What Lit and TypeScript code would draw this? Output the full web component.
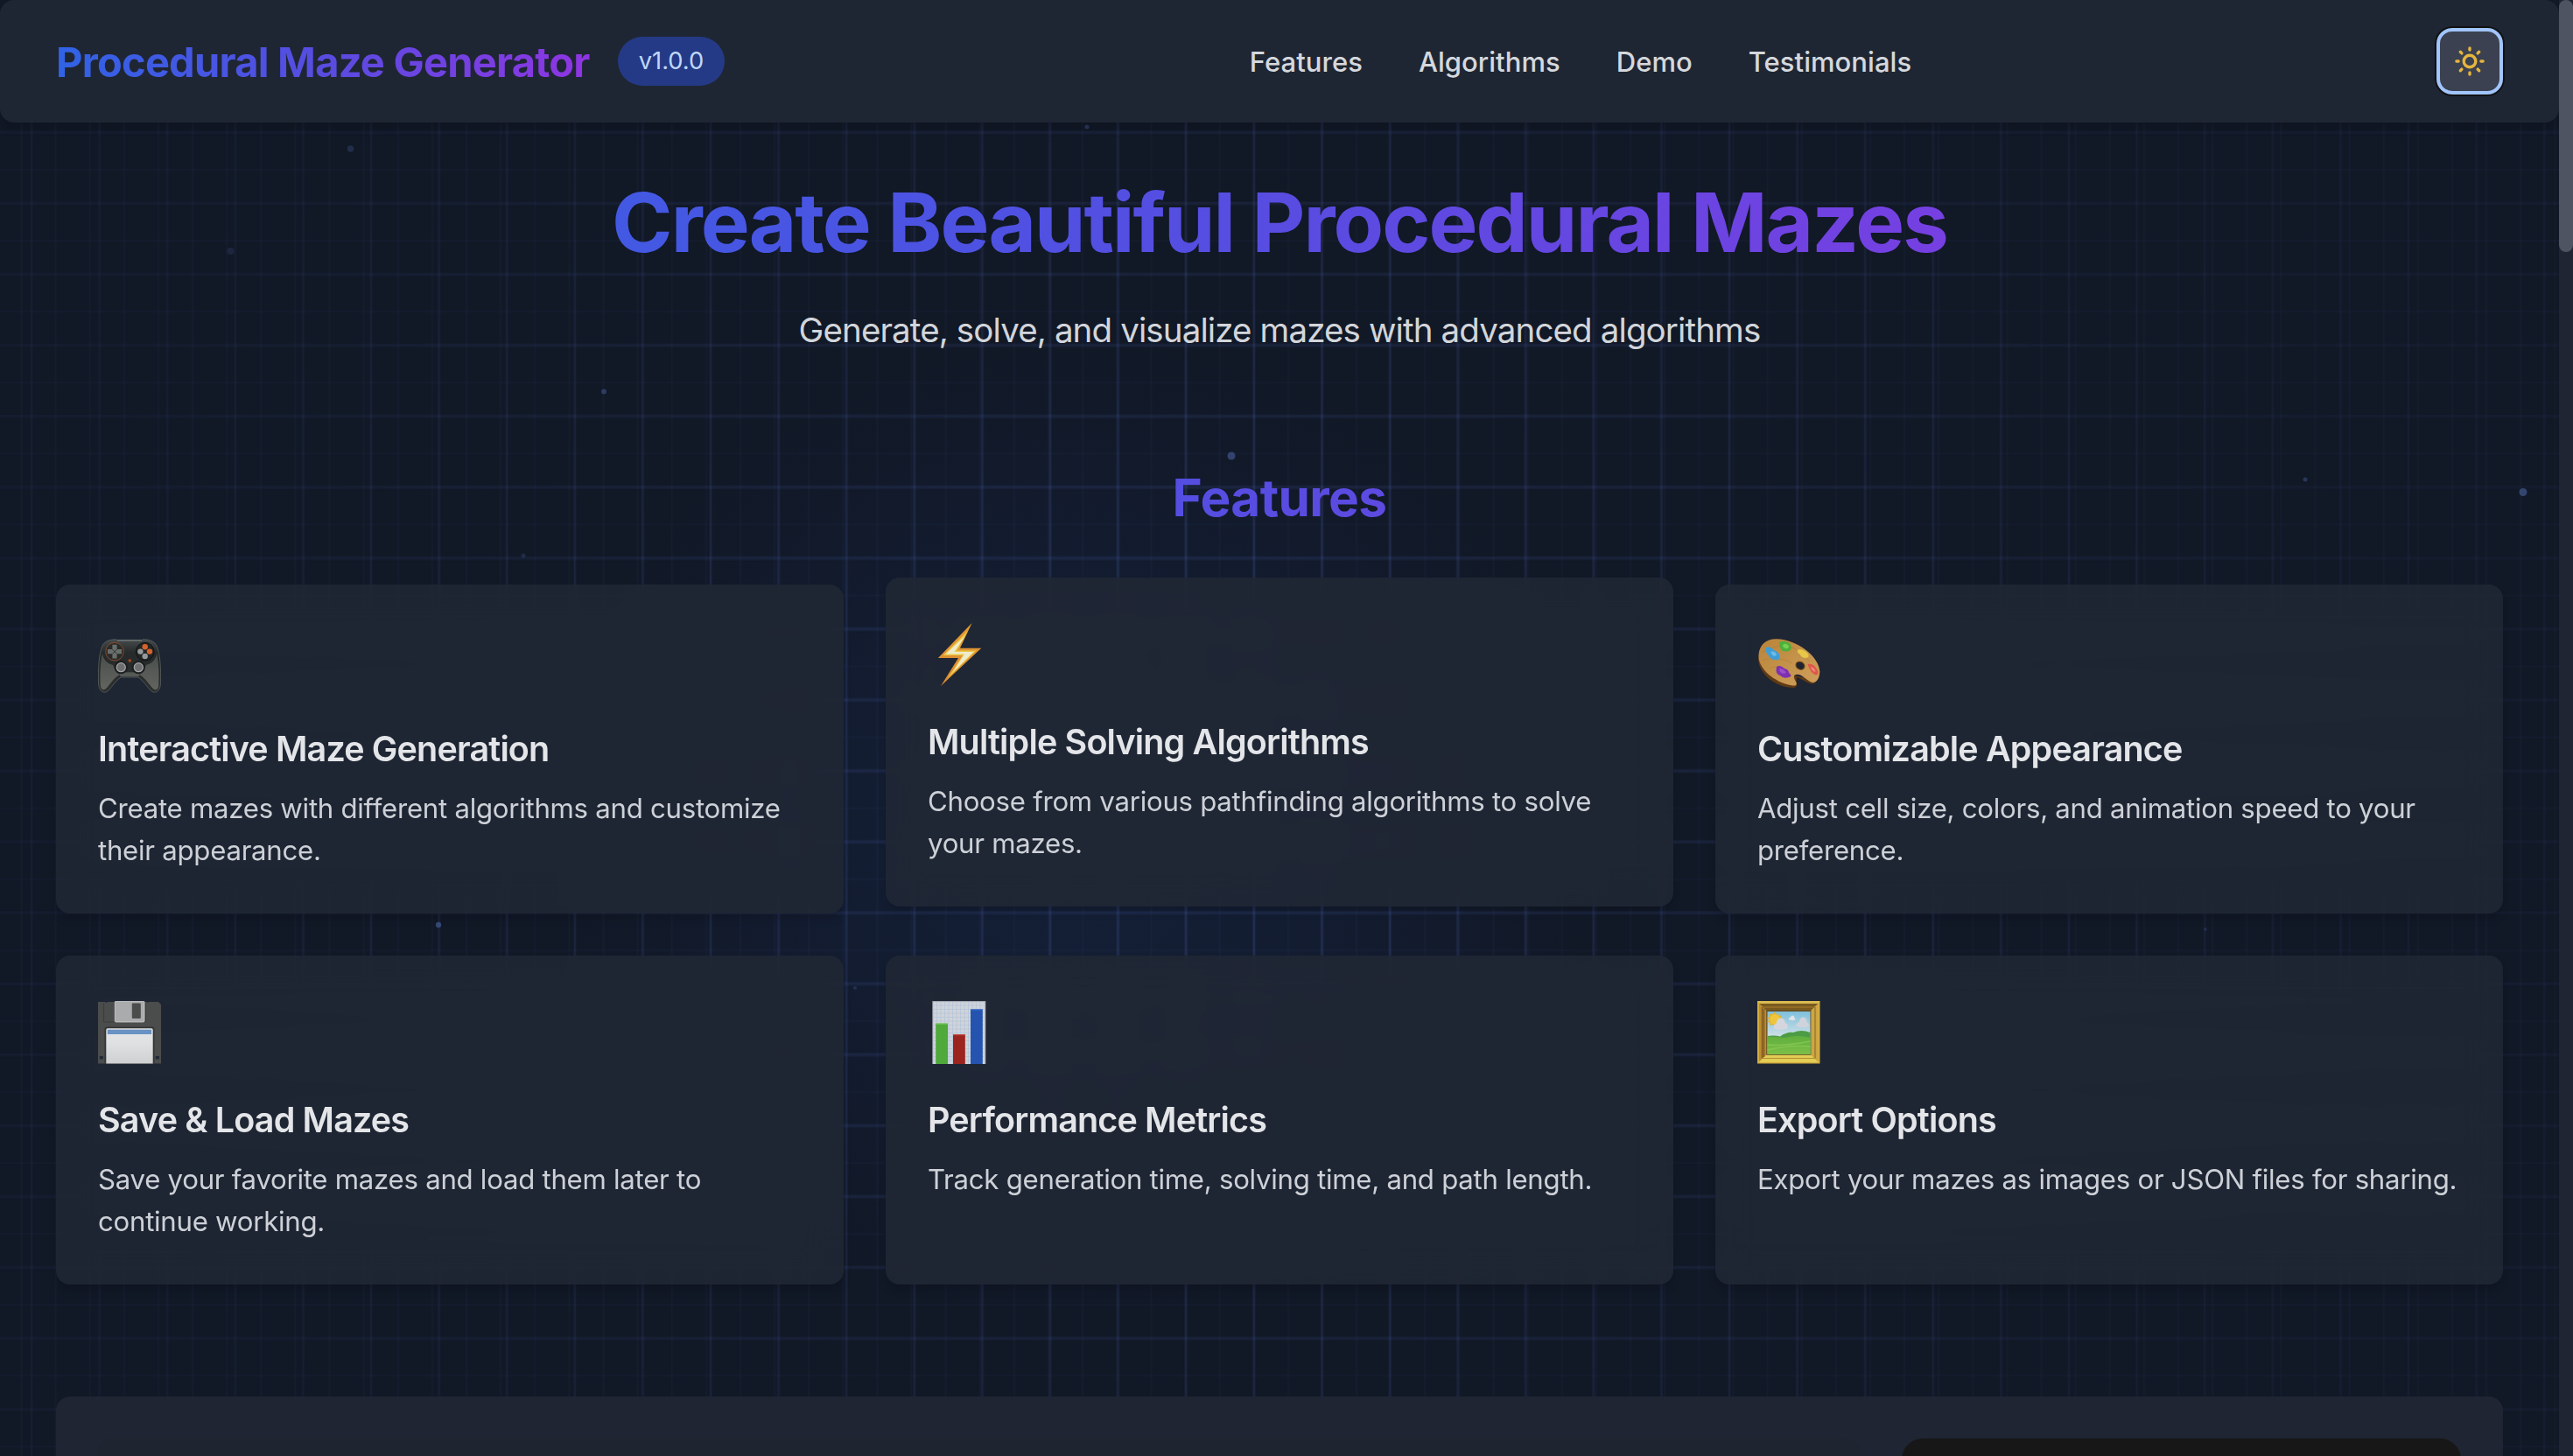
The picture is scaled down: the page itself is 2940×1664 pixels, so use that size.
import { LitElement, html, css, svg, nothing } from "lit";
import { customElement, property } from "lit/decorators.js";

const gamepad = svg`
  <defs>
    <linearGradient id="gp" x1="0" y1="0" x2="0" y2="1"><stop offset="0" stop-color="#454b4b"/><stop offset=".25" stop-color="#262a2a"/><stop offset="1" stop-color="#2b2f2e"/></linearGradient>
    <linearGradient id="gh" x1="0" y1="0" x2="0" y2="1"><stop offset="0" stop-color="#4a4e4c"/><stop offset="1" stop-color="#62645f"/></linearGradient>
  </defs>
  <path d="M5 18 C7 13 14 10.4 21 10.8 L22 12 L50 12 L51 10.8 C58 10.4 65 13 67 18 C71 28 72 42 71.4 62 C71 70 65 74 60 69 C56 65 52 58 46 54 L26 54 C20 58 16 65 12 69 C7 74 1 70 .6 62 C0 42 1 28 5 18Z" fill="url(#gp)" stroke="#565b59" stroke-width=".9"/>
  <path d="M5 27 C2.500 38 2 52 2.800 64 C4 70 8 69 11 65 C15 60 19 54 25 51 C20 49 19 44 17 40 C9 38 6 33 5 27Z" fill="url(#gh)"/>
  <path d="M67 27 C69.500 38 70 52 69.200 64 C68 70 64 69 61 65 C57 60 53 54 47 51 C52 49 53 44 55 40 C63 38 66 33 67 27Z" fill="url(#gh)"/>
  <path d="M24 49.500 Q36 47 48 49.500 L46.500 53 L25.500 53Z" fill="#555956"/>
  <circle cx="19" cy="24.700" r="10.300" fill="#282b2b" stroke="#8a4a2a" stroke-width="1"/>
  <circle cx="53.700" cy="24.700" r="10.300" fill="#222525" stroke="#111" stroke-width="1"/>
  <path d="M16.400 16.800h5.200v5.300h5.400v5.200h-5.400v5.300h-5.200v-5.300h-5.400v-5.200h5.400z" fill="#6a6f6b"/>
  <path d="M16.400 22.100l5.200 5.200M21.600 22.100l-5.200 5.200" stroke="#303433" stroke-width="1"/>
  <circle cx="53.700" cy="19.200" r="3.200" fill="#d4622a"/><circle cx="59" cy="24.600" r="3.200" fill="#d4622a"/>
  <circle cx="48.400" cy="24.600" r="3.200" fill="#96999a"/><circle cx="53.700" cy="30" r="3.200" fill="#96999a"/>
  <circle cx="36.300" cy="35" r="2" fill="#823a1d"/><circle cx="36.300" cy="35" r=".7" fill="#e07834"/>
  <circle cx="26.300" cy="42.700" r="7.600" fill="#1c1f1f"/><circle cx="46.300" cy="42.700" r="7.600" fill="#1c1f1f"/>
  <circle cx="26.300" cy="42.700" r="5" fill="#6d706f" stroke="#a1a4a4" stroke-width="1.300"/>
  <circle cx="46.300" cy="42.700" r="5" fill="#6d706f" stroke="#a1a4a4" stroke-width="1.300"/>
  <path d="M22 11.800H50" stroke="#8b9190" stroke-width=".9"/>`;

const bolt = svg`
  <defs><linearGradient id="bo" x1="0" y1="0" x2="0" y2="1"><stop offset="0" stop-color="#e39b34"/><stop offset="1" stop-color="#d98a30"/></linearGradient></defs>
  <path d="M50.600 0 L37 28.700 L61.300 28.700 L15 72 L35 40 L11.900 40Z" fill="url(#bo)"/>
  <path d="M46 9 L33.500 31.500 L55.500 31.500 L23 63 L40 37 L17.500 37Z" fill="#ecc848"/>
  <path d="M42.500 15 L30.500 33 L52.500 33 L29 56 L42 35.500 L20.500 35.500Z" fill="#efeccb"/>`;

const palette = svg`
  <defs><linearGradient id="pa" x1="0" y1="0" x2="1" y2="1"><stop offset="0" stop-color="#b98439"/><stop offset=".5" stop-color="#c4924a"/><stop offset="1" stop-color="#cf9f5c"/></linearGradient></defs>
  <path d="M1 31 C0 50 22 66 41 66 C45 66 46 63 44.500 59 L45 54 C52 56 58 62 63.700 61.500 C69 60 71.500 52 71.500 47 L62 56 L42 52 L36 60Z" fill="#5f3a16"/>
  <path d="M1.500 28 C2.500 17 10 10 22 10.300 C46 11 70 30 71.300 47 C71.300 54 68.500 60 63 60 C57 59 52 50.500 45 50.800 C40 51.500 42 55.500 44.500 60 C45.500 63.500 43 64 39 63.300 C20 60 0 44 1.500 28Z" fill="url(#pa)"/>
  <path d="M6 25 Q26 14 42 21 M6 34 Q26 30 40 38 M14 44 Q24 38 38 50 M26 15 Q44 18 60 36" fill="none" stroke="#ab7831" stroke-width=".8" opacity=".55"/>
  <ellipse cx="49" cy="40.700" rx="5.200" ry="4.300" transform="rotate(30 49 40.700)" fill="#1e2430" stroke="#6d4418" stroke-width="1"/>
  <path d="M10 20 Q15 18 19 23 Q25 25 25.500 30 Q26 35 20 34 Q15 34 12 28 Q8 24 10 20Z" fill="#3f9dd6"/>
  <path d="M15 25 Q20 23 22 28 Q21 31 17.500 29Z" fill="#6dbbe8"/>
  <path d="M25.500 14 Q28 12 33 13.500 Q39 15 38.500 19.500 Q39 24 34 24.500 Q27 25 26 20 Q24 17 25.500 14Z" fill="#4cb03a"/>
  <ellipse cx="32.500" cy="18.500" rx="3.500" ry="2.500" fill="#77cf55" transform="rotate(25 32.500 18.500)"/>
  <path d="M46 22.500 Q52 21 57 26 Q61 31 56 32 Q50 32 49 28 Q45 26 46 22.500Z" fill="#e6c748"/>
  <path d="M57.500 39 Q64 38 67.500 44 Q72 51 67 51.500 Q61 50 57.500 39Z" fill="#e0564a"/>
  <path d="M61 42 Q66 43 66.500 48 Q62 47 61 42Z" fill="#f08a7a"/>
  <path d="M22 42 Q26 39 31 44 Q36 45 36 49 Q41 53 36 54 Q30 56 26 52 Q20 50 22 42Z" fill="#7d31b1"/>
  <path d="M25 44 Q30 44 33 49 Q29 51 26 48Z" fill="#9c50cc"/>`;

const floppy = svg`
  <defs><linearGradient id="fl" x1="0" y1="0" x2="0" y2="1"><stop offset="0" stop-color="#e3e4e6"/><stop offset=".4" stop-color="#e0e1e3"/><stop offset="1" stop-color="#cfd0d2"/></linearGradient></defs>
  <path d="M0 1H8L9.500 2L11 1H56L57 2L58 1H69L72 4V71.500H0Z" fill="#4b4c4c"/>
  <path d="M6.500 2V24H18M54.500 2V24" fill="none" stroke="#3c3d3d" stroke-width="1.200"/>
  <rect x="19.300" y="0" width="33.700" height="24" rx="1.500" fill="#a9abad" stroke="#d0d2d3" stroke-width=".8"/>
  <rect x="38.800" y="2.600" width="10" height="17.400" rx="1" fill="#4b4c4c"/>
  <path d="M7.500 71.500V32Q7.500 29.500 10 29.500H62Q64.500 29.500 64.500 32V71.500Z" fill="#343535"/>
  <path d="M9.300 71.500V33Q9.300 31.300 11 31.300H61Q62.700 31.300 62.700 33V71.500Z" fill="url(#fl)"/>
  <rect x="10.800" y="32.700" width="50.300" height="5.300" fill="#6892c3"/>
  <rect x="1.800" y="63" width="4" height="3.500" fill="#222937"/><rect x="65.800" y="63" width="4" height="3.500" fill="#222937"/>`;

const chart = svg`
  <rect x="5.300" y="0" width="61" height="72" fill="#a3a9b2"/>
  <rect x="6.300" y="1.200" width="59" height="70.800" fill="#d0d4da"/>
  <path d="M6 5H66M6 9.500H66M6 14H66M6 18.500H66M6 23H66M6 27.500H66M6 32H66M6 36.500H66M6 41H66M6 45.500H66M6 50H66M6 54.500H66M6 59H66M6 63.500H66M6 68H66M10.500 1V72M15 1V72M19.500 1V72M24 1V72M28.500 1V72M33 1V72M37.500 1V72M42 1V72M46.500 1V72M51 1V72M55.500 1V72M60 1V72" stroke="#b5c5d8" stroke-width=".8" fill="none"/>
  <rect x="9.200" y="25.600" width="13.800" height="46.400" fill="#4fa93b"/>
  <rect x="29" y="38.300" width="13.800" height="33.700" fill="#9c241f"/>
  <rect x="49" y="9.300" width="13.800" height="62.700" fill="#2554b0"/>
  <path d="M9.200 26.100h13.800" stroke="#7cd05f"/><path d="M29 38.800h13.800" stroke="#c4473e"/><path d="M49 9.800h13.800" stroke="#4c7fd6"/>`;

const frame = svg`
  <defs>
    <linearGradient id="sk" x1="0" y1="0" x2="0" y2="1"><stop offset="0" stop-color="#7fc0dc"/><stop offset=".6" stop-color="#cfe0e6"/></linearGradient>
    <linearGradient id="gr" x1="0" y1="0" x2="0" y2="1"><stop offset="0" stop-color="#5fae3e"/><stop offset="1" stop-color="#7cbf48"/></linearGradient>
  </defs>
  <rect width="71.500" height="71.500" fill="#d3ae41"/>
  <path d="M2 3H69.500L60 12H11Z" fill="#7a5a1f"/>
  <path d="M0 0H71.500L69.500 3H2Z" fill="#d9ba50"/>
  <path d="M2 3L11 12V61L2 69Z" fill="#b98d33"/><path d="M69.500 3L60.500 12V61L69.500 69Z" fill="#cda643"/>
  <path d="M2 70L11 61H60.500L69.500 70Z" fill="#e3cd55"/>
  <path d="M5.500 7V65.500M7.500 9V64" stroke="#7f5720" stroke-width="1.400"/><path d="M66 7V65.500" stroke="#93702a" stroke-width="1.200"/>
  <path d="M6 7H66" stroke="#a47c2d" stroke-width="1.200"/><path d="M6 65.500H66" stroke="#b08f32" stroke-width="1.200"/>
  <rect x="10.300" y="10.800" width="51" height="51" fill="#5f4a22"/>
  <rect x="11.500" y="12" width="49" height="49" fill="url(#sk)"/>
  <path d="M19.500 12.500l1.500 3 3-2 .5 3.500 3.500-.5-1.500 3 3 1.800-3 2 1.500 3-3.500-.3-.7 3.500-2.800-2-2 2.800-1.500-3.200-3.300 1 .5-3.300-3.400-.7 2.200-2.600-2.400-2.600 3.300-1-1-3.300 3.400.6z" fill="#e0b32d"/>
  <circle cx="20" cy="21" r="6" fill="#efc63c"/>
  <path d="M19 31 Q17 27 21.500 26 Q22 20 27 19.500 Q32 20 31.500 25 Q36 26 34.500 31 Q32 33 27 32.500 Q21 33.500 19 31Z" fill="#d5d6dd"/>
  <path d="M35.500 21 Q36 18.500 38 18.500 Q39 15.500 41.500 17 Q43 20 43.500 21.500Q39 23 35.500 21Z" fill="#dfe3e8"/>
  <path d="M44 28.500 Q45 24.500 48 24 Q48.500 18.500 52.500 18.500 Q57 19 56.500 24 Q60 26 58.500 29.500 Q50 31.500 44 28.500Z" fill="#cfd3dc"/>
  <path d="M11.500 40 Q20 39 26 40.500 Q34 35 41 36 Q50 32 60.500 36 V61 H11.500Z" fill="#4c9c45"/>
  <path d="M11.500 41 Q24 41 31 42 Q46 38 60.500 42 V61 H11.500Z" fill="url(#gr)"/>
  <path d="M11.500 50 Q30 52 60.500 46 M11.500 56 Q36 50 60.500 52" stroke="#91cf58" stroke-width="1.500" fill="none" opacity=".6"/>`;

const FEATURES = [
  { icon: gamepad, title: "Interactive Maze Generation", text: "Create mazes with different algorithms and customize their appearance." },
  { icon: bolt, title: "Multiple Solving Algorithms", text: "Choose from various pathfinding algorithms to solve your mazes.", raised: true },
  { icon: palette, title: "Customizable Appearance", text: "Adjust cell size, colors, and animation speed to your preference." },
  { icon: floppy, title: "Save & Load Mazes", text: "Save your favorite mazes and load them later to continue working." },
  { icon: chart, title: "Performance Metrics", text: "Track generation time, solving time, and path length." },
  { icon: frame, title: "Export Options", text: "Export your mazes as images or JSON files for sharing." },
];

@customElement("feature-card")
class FeatureCard extends LitElement {
  @property({ attribute: false }) icon: unknown = nothing;
  @property() heading = "";
  @property() text = "";

  static styles = css`
    :host {
      display: block;
      box-sizing: border-box;
      height: 376px;
      padding: 52px 36px 0 48px;
      border-radius: 16px;
      background: rgba(32, 39, 52, 0.9);
      backdrop-filter: blur(20px);
      box-shadow: 0 8px 12px -2px rgba(0, 0, 0, 0.12), 0 4px 8px -2px rgba(0, 0, 0, 0.08);
    }
    .icon { display: block; width: 72px; height: 72px; }
    .title {
      margin: 40px 0 20px;
      font-size: 39.5px;
      font-weight: 600;
      line-height: 48px;
      letter-spacing: -0.84px;
      color: #e3e5e8;
      white-space: nowrap;
    }
    .text {
      margin: 0;
      font-size: 31.2px;
      line-height: 48px;
      letter-spacing: -0.27px;
      color: #cdd1d7;
    }
  `;

  render() {
    return html`
      <svg class="icon" viewBox="0 0 72 72">${this.icon}</svg>
      <h3 class="title">${this.heading}</h3>
      <p class="text">${this.text}</p>
    `;
  }
}

/* x, y, radius, opacity */
const PARTICLES = [
  [400.5, 170, 3.8, 0.25], [263.5, 287, 4, 0.16], [690, 447.5, 3, 0.4], [1407, 521, 4.5, 0.48],
  [2883, 562.5, 4.5, 0.5], [2634, 548, 2.5, 0.35], [598, 635, 2.5, 0.22], [501, 1057, 3.2, 0.5],
  [1242, 145, 2.5, 0.35], [977, 1129, 2, 0.25], [2520, 1062, 2, 0.2],
];

@customElement("maze-backdrop")
class MazeBackdrop extends LitElement {
  static styles = css`
    :host { position: absolute; inset: 0; overflow: hidden; background: #111826; }
    .layer { position: absolute; inset: 0; display: block; width: 100%; height: 100%; }
    .strong { mask-image: radial-gradient(1500px 1300px at 1400px 900px, #000 0%, rgba(0, 0, 0, 0.75) 45%, rgba(0, 0, 0, 0.34) 90%); }
    .glow { position: absolute; inset: 0; background: radial-gradient(600px 560px at 1230px 950px, rgba(40, 80, 170, 0.13), rgba(40, 80, 170, 0.07) 55%, transparent); }
  `;

  render() {
    return html`
      <div class="glow"></div>
      <svg class="layer">
        <defs>
          <pattern id="minor" x="62.500" y="193" width="39.120" height="81.070" patternUnits="userSpaceOnUse">
            <rect width="2" height="81.070" fill="#3d4c96" opacity=".06" />
            <rect width="39.120" height="2" fill="#3d4c96" opacity=".05" />
          </pattern>
        </defs>
        <rect width="100%" height="100%" fill="url(#minor)" />
      </svg>
      <svg class="layer strong">
        <defs>
          <pattern id="major" x="34" y="149" width="77.600" height="81.070" patternUnits="userSpaceOnUse">
            <rect x="0" width="4" height="81.070" fill="#4d62b4" opacity=".09" />
            <rect x="1" width="2" height="81.070" fill="#4d62b4" opacity=".15" />
            <rect y="0" width="77.600" height="5" fill="#4d62b4" opacity=".08" />
            <rect y="1.200" width="77.600" height="2.400" fill="#4d62b4" opacity=".12" />
          </pattern>
        </defs>
        <rect width="100%" height="100%" fill="url(#major)" />
      </svg>
      <svg class="layer">
        ${PARTICLES.map(([x, y, r, o]) => svg`<circle cx=${x} cy=${y} r=${r} fill="#5571b8" opacity=${o} />`)}
      </svg>
    `;
  }
}

@customElement("app-root")
class AppRoot extends LitElement {
  static styles = css`
    :host {
      display: flex;
      position: relative;
      width: 2940px;
      height: 1664px;
      overflow: hidden;
      background: #111826;
      font-family: Inter, "Liberation Sans", sans-serif;
    }
    .page { position: relative; width: 2924px; flex: none; }
    .header {
      display: flex;
      align-items: center;
      justify-content: space-between;
      box-sizing: border-box;
      height: 140px;
      padding: 0 64px;
      border-radius: 16px;
      background: #1f2633;
      box-shadow: 0 8px 12px -2px rgba(0, 0, 0, 0.16);
    }
    .brand { display: flex; align-items: center; width: 764px; justify-content: space-between; }
    .gradient {
      background: linear-gradient(90deg, #3063e5, #584ce1 50%, #8f35e2);
      -webkit-background-clip: text;
      background-clip: text;
      color: transparent;
    }
    .logo { padding-top: 2px; font-size: 47px; font-weight: 700; line-height: 60px; letter-spacing: -0.76px; white-space: nowrap; }
    .badge {
      box-sizing: border-box;
      width: 122px;
      height: 56px;
      border-radius: 28px;
      background: #253a86;
      color: #bfd8fb;
      font-size: 27.3px;
      line-height: 56px;
      text-align: center;
    }
    .nav { display: flex; gap: 64px; padding-top: 1px; font-size: 31px; font-weight: 500; line-height: 48px; color: #d5d8dd; letter-spacing: 0.04px; }
    .toggle {
      display: flex;
      align-items: center;
      justify-content: center;
      box-sizing: border-box;
      width: 76px;
      height: 76px;
      border: 4px solid #a1c5fc;
      border-radius: 18px;
      background: #3b4150;
      box-shadow: 0 0 0 2px #111214;
    }
    .sun { width: 40px; height: 40px; }
    .main { padding: 56px 64px 0; text-align: center; }
    .hero { margin: 0; font-size: 94px; font-weight: 700; line-height: 116px; letter-spacing: -1.95px; }
    .lead { margin: 35px 0 0; font-size: 38.5px; line-height: 60px; color: #d2d5da; letter-spacing: -0.88px; }
    .section-title { margin: 126px 0 63px; font-size: 58.5px; font-weight: 700; line-height: 72px; letter-spacing: -0.6px; }
    .cards { display: grid; grid-template-columns: repeat(3, 1fr); gap: 48px; text-align: left; }
    .raised { transform: translateY(-8px); }
    .demo {
      display: grid;
      grid-template-columns: 2013px 1fr;
      gap: 48px;
      box-sizing: border-box;
      height: 400px;
      margin-top: 128px;
      padding: 48px;
      border-radius: 16px;
      background: #1f2532;
    }
    .controls { border-radius: 16px; background: #1e2430; }
    .canvas { border-radius: 24px; background: #171717; }
    .scrollbar { position: relative; width: 16px; flex: none; background: #1f2532; }
    .thumb { height: 288px; border-radius: 8px; background: #4e5461; }
  `;

  render() {
    return html`
      <maze-backdrop></maze-backdrop>
      <div class="page">
        <header class="header">
          <div class="brand">
            <span class="logo gradient">Procedural Maze Generator</span>
            <span class="badge">v1.0.0</span>
          </div>
          <nav class="nav">
            ${["Features", "Algorithms", "Demo", "Testimonials"].map((label) => html`<span>${label}</span>`)}
          </nav>
          <div class="toggle">
            <svg class="sun" viewBox="-20 -20 40 40" fill="none" stroke="#e5b53e" stroke-width="3.400">
              <circle r="6.800" />
              ${[0, 45, 90, 135, 180, 225, 270, 315].map(
                (angle) => svg`<path d="M0 -12.900V-15.100" stroke-linecap="round" transform="rotate(${angle})" />`,
              )}
            </svg>
          </div>
        </header>
        <main class="main">
          <h1 class="hero gradient">Create Beautiful Procedural Mazes</h1>
          <p class="lead">Generate, solve, and visualize mazes with advanced algorithms</p>
          <h2 class="section-title gradient">Features</h2>
          <div class="cards">
            ${FEATURES.map(
              (f) => html`<feature-card class=${f.raised ? "raised" : ""} .icon=${f.icon} .heading=${f.title} .text=${f.text}></feature-card>`,
            )}
          </div>
          <section class="demo">
            <div class="controls"></div>
            <div class="canvas"></div>
          </section>
        </main>
      </div>
      <div class="scrollbar"><div class="thumb"></div></div>
    `;
  }
}
